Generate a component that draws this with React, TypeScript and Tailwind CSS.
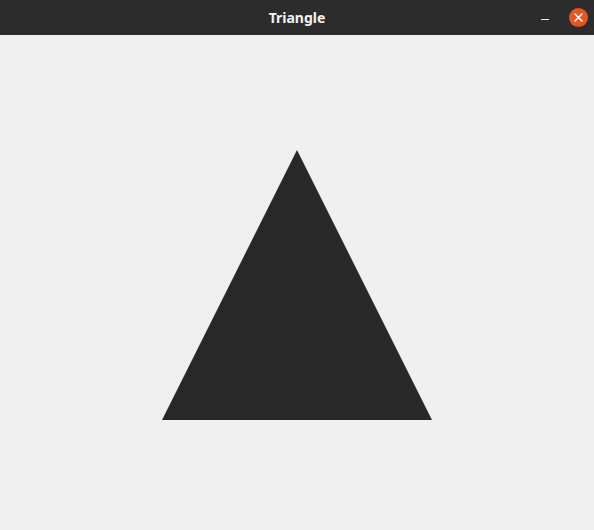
export default function App() {
  return (
    <div className="w-[594px] h-[530px] flex flex-col bg-[#f0f0f0] overflow-hidden">
      <div className="h-[35px] shrink-0 bg-[#2c2c2c] relative flex items-center justify-center">
        <span className="text-[14px] font-bold text-[#f2f2f2] leading-none" style={{ fontFamily: '"Noto Sans", "DejaVu Sans", sans-serif' }}>
          Triangle
        </span>
        <div className="absolute right-[6px] top-0 h-[35px] flex items-center gap-[20px]">
          <div className="w-[8px] h-[1px] bg-[#f2f2f2] mt-[4px]" />
          <div className="w-[19px] h-[19px] rounded-full bg-[#e95420] flex items-center justify-center">
            <svg width="9" height="9" viewBox="0 0 9 9">
              <path d="M1 1 L8 8 M8 1 L1 8" stroke="#ffffff" strokeWidth="1.6" strokeLinecap="round" />
            </svg>
          </div>
        </div>
      </div>
      <div className="flex-1">
        <svg width="594" height="495" viewBox="0 0 594 495">
          <polygon points="297,115 162,385 432,385" fill="#282828" />
        </svg>
      </div>
    </div>
  );
}
